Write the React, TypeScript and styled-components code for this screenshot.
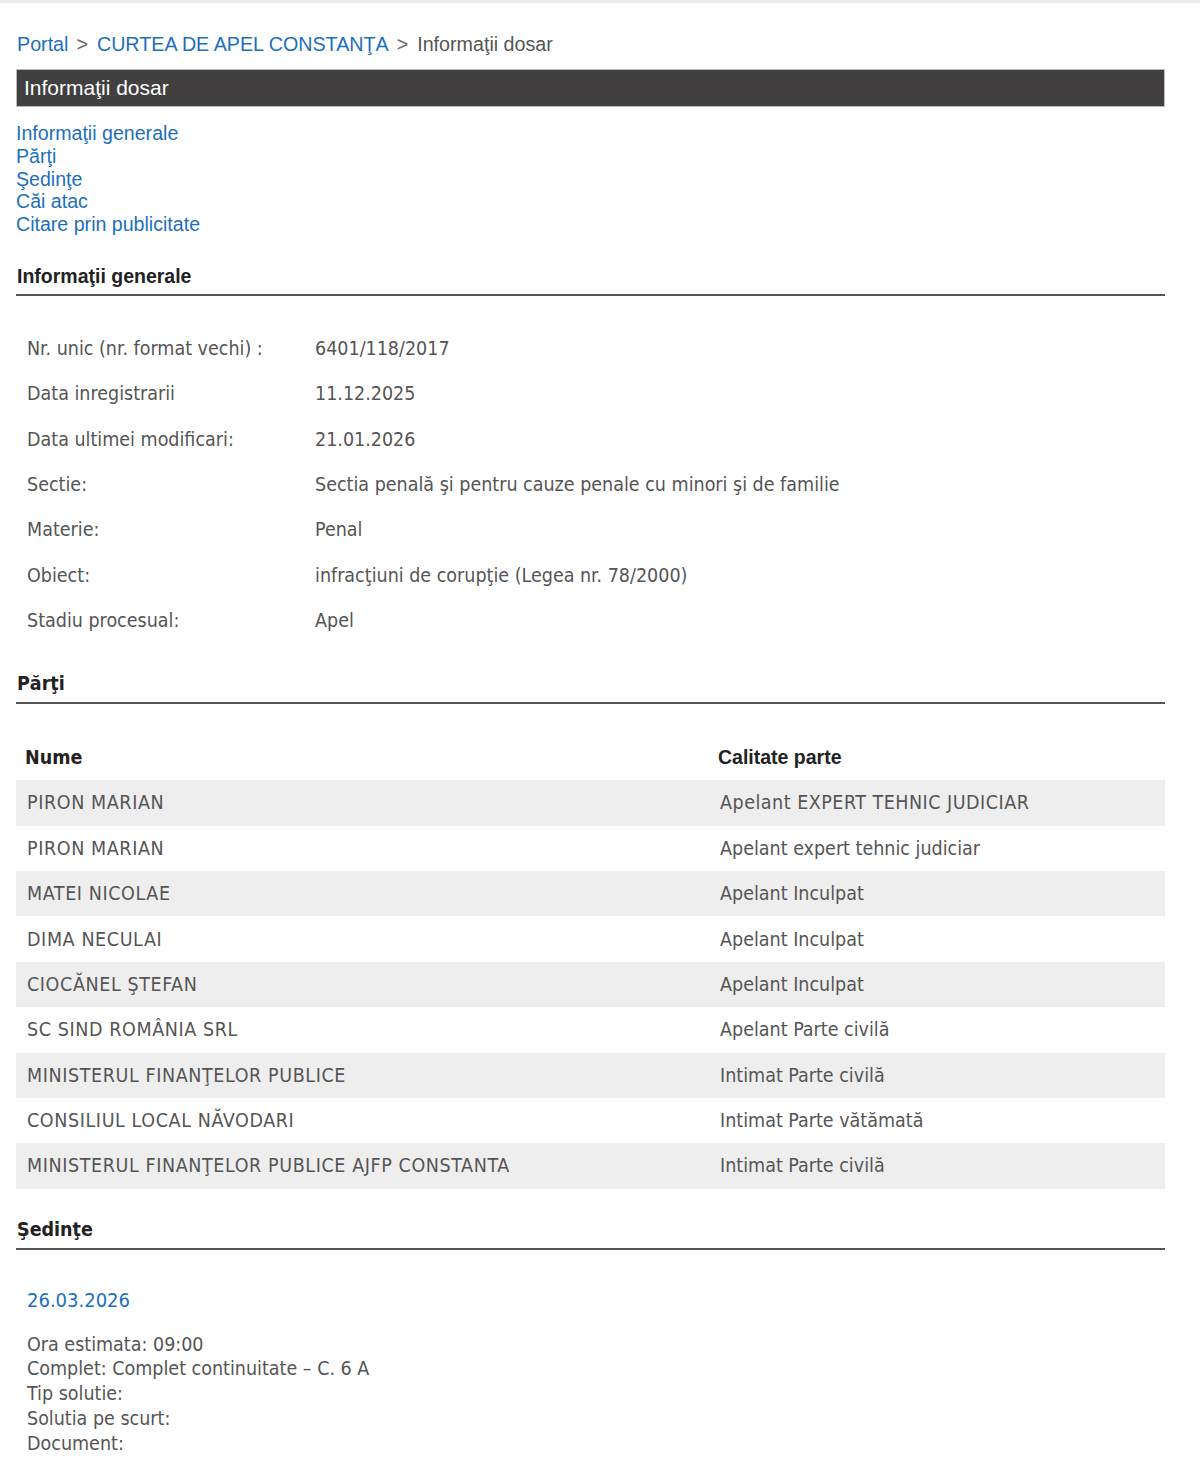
import styled, { createGlobalStyle } from "styled-components";

const GlobalStyle = createGlobalStyle`
  html, body {
    margin: 0;
    padding: 0;
    background: #ffffff;
  }
  body {
    font-family: "Liberation Sans", Arial, sans-serif;
    color: #555555;
  }
`;

const ARIAL = `"Liberation Sans", Arial, sans-serif`;
const TAHOMA = `"DejaVu Sans Condensed", "DejaVu Sans", Tahoma, sans-serif`;

const Page = styled.div`
  border-top: 3px solid #ececec;
  padding: 0 35px 20px 16px;
`;

const Breadcrumb = styled.div`
  font-family: ${ARIAL};
  font-size: 19.7px;
  line-height: 24px;
  margin-top: 29px;
  padding-left: 1px;
  color: #555;
  display: flex;
  gap: 6px;
  a {
    color: #1d6fbd;
    text-decoration: none;
  }
`;

const Sep = styled.span`
  color: #666;
  margin: 0 3px 0 2px;
`;

const TitleBar = styled.div`
  margin-top: 13px;
  height: 36px;
  background: #413f40;
  border: 1px solid #b8b8b8;
  color: #ffffff;
  font-family: ${ARIAL};
  font-size: 21px;
  display: flex;
  align-items: center;
  padding-left: 7px;
`;

const Anchors = styled.nav`
  margin-top: 15px;
  display: flex;
  flex-direction: column;
  a {
    font-family: ${ARIAL};
    font-size: 19.6px;
    line-height: 22.75px;
    color: #1d6fbd;
    text-decoration: none;
    width: fit-content;
  }
`;

const SectionHead = styled.h2<{ $tahoma?: boolean }>`
  margin: ${(p) => (p.$tahoma ? "30px" : "29px")} 0 0;
  padding: 0 0 7px 1px;
  font-family: ${(p) => (p.$tahoma ? TAHOMA : ARIAL)};
  font-size: 19.5px;
  line-height: 22px;
  font-weight: bold;
  color: #222;
  border-bottom: 2px solid #555;
`;

const InfoTable = styled.div`
  margin-top: 30px;
  display: grid;
  grid-template-columns: 288px 1fr;
  grid-auto-rows: 45.35px;
  align-items: center;
  padding-left: 11px;
  font-family: ${TAHOMA};
  font-size: 19.5px;
  color: #555;
`;

const PartyTable = styled.div`
  margin-top: 31px;
  font-family: ${TAHOMA};
  font-size: 19.5px;
`;

const PartyRow = styled.div<{ $shade?: boolean }>`
  display: grid;
  grid-template-columns: 693px 1fr;
  height: 45.4px;
  align-items: center;
  padding-left: 11px;
  background: ${(p) => (p.$shade ? "#eeeeee" : "transparent")};
  color: #555;
`;

// party names are all capitals, which run a touch wider than the role text
const NameCell = styled.span`
  letter-spacing: 0.6px;
`;

const RoleCell = styled.span<{ $caps?: boolean }>`
  letter-spacing: ${(p) => (p.$caps ? "0.5px" : "0")};
`;

const HeadRow = styled(PartyRow)`
  height: 45px;
  padding-left: 9px;
  color: #222;
  font-weight: bold;
  span:last-child {
    font-family: ${ARIAL};
  }
`;

const Hearing = styled.div`
  padding-left: 11px;
  margin-top: 38px;
  font-family: ${TAHOMA};
  font-size: 19.5px;
  color: #555;
`;

const HearingDate = styled.a`
  display: block;
  color: #1d6fbd;
  text-decoration: none;
  font-size: 20px;
  line-height: 24px;
  margin-bottom: 21px;
`;

const HearingLine = styled.div`
  line-height: 24.75px;
`;

const info: [string, string][] = [
  ["Nr. unic (nr. format vechi) :", "6401/118/2017"],
  ["Data inregistrarii", "11.12.2025"],
  ["Data ultimei modificari:", "21.01.2026"],
  ["Sectie:", "Sectia penală şi pentru cauze penale cu minori şi de familie"],
  ["Materie:", "Penal"],
  ["Obiect:", "infracţiuni de corupţie (Legea nr. 78/2000)"],
  ["Stadiu procesual:", "Apel"],
];

const parties: [string, string][] = [
  ["PIRON MARIAN", "Apelant EXPERT TEHNIC JUDICIAR"],
  ["PIRON MARIAN", "Apelant expert tehnic judiciar"],
  ["MATEI NICOLAE", "Apelant Inculpat"],
  ["DIMA NECULAI", "Apelant Inculpat"],
  ["CIOCĂNEL ŞTEFAN", "Apelant Inculpat"],
  ["SC SIND ROMÂNIA SRL", "Apelant Parte civilă"],
  ["MINISTERUL FINANŢELOR PUBLICE", "Intimat Parte civilă"],
  ["CONSILIUL LOCAL NĂVODARI", "Intimat Parte vătămată"],
  ["MINISTERUL FINANŢELOR PUBLICE AJFP CONSTANTA", "Intimat Parte civilă"],
];

export default function App() {
  return (
    <>
      <GlobalStyle />
      <Page>
        <Breadcrumb>
          <a href="#">Portal</a>
          <Sep>&gt;</Sep>
          <a href="#">CURTEA DE APEL CONSTANŢA</a>
          <Sep>&gt;</Sep>
          <span>Informaţii dosar</span>
        </Breadcrumb>

        <TitleBar>Informaţii dosar</TitleBar>

        <Anchors>
          <a href="#generale">Informaţii generale</a>
          <a href="#parti">Părţi</a>
          <a href="#sedinte">Şedinţe</a>
          <a href="#cai">Căi atac</a>
          <a href="#citare">Citare prin publicitate</a>
        </Anchors>

        <SectionHead id="generale">Informaţii generale</SectionHead>
        <InfoTable>
          {info.flatMap(([k, v]) => [
            <span key={k}>{k}</span>,
            <span key={k + "-v"}>{v}</span>,
          ])}
        </InfoTable>

        <SectionHead id="parti" $tahoma>
          Părţi
        </SectionHead>
        <PartyTable>
          <HeadRow>
            <span>Nume</span>
            <span>Calitate parte</span>
          </HeadRow>
          {parties.map(([name, role], i) => (
            <PartyRow key={i} $shade={i % 2 === 0}>
              <NameCell>{name}</NameCell>
              <RoleCell $caps={/[A-Z]{4,}/.test(role)}>{role}</RoleCell>
            </PartyRow>
          ))}
        </PartyTable>

        <SectionHead id="sedinte" $tahoma>
          Şedinţe
        </SectionHead>
        <Hearing>
          <HearingDate href="#">26.03.2026</HearingDate>
          <HearingLine>Ora estimata: 09:00</HearingLine>
          <HearingLine>Complet: Complet continuitate – C. 6 A</HearingLine>
          <HearingLine>Tip solutie:</HearingLine>
          <HearingLine>Solutia pe scurt:</HearingLine>
          <HearingLine>Document:</HearingLine>
        </Hearing>
      </Page>
    </>
  );
}
